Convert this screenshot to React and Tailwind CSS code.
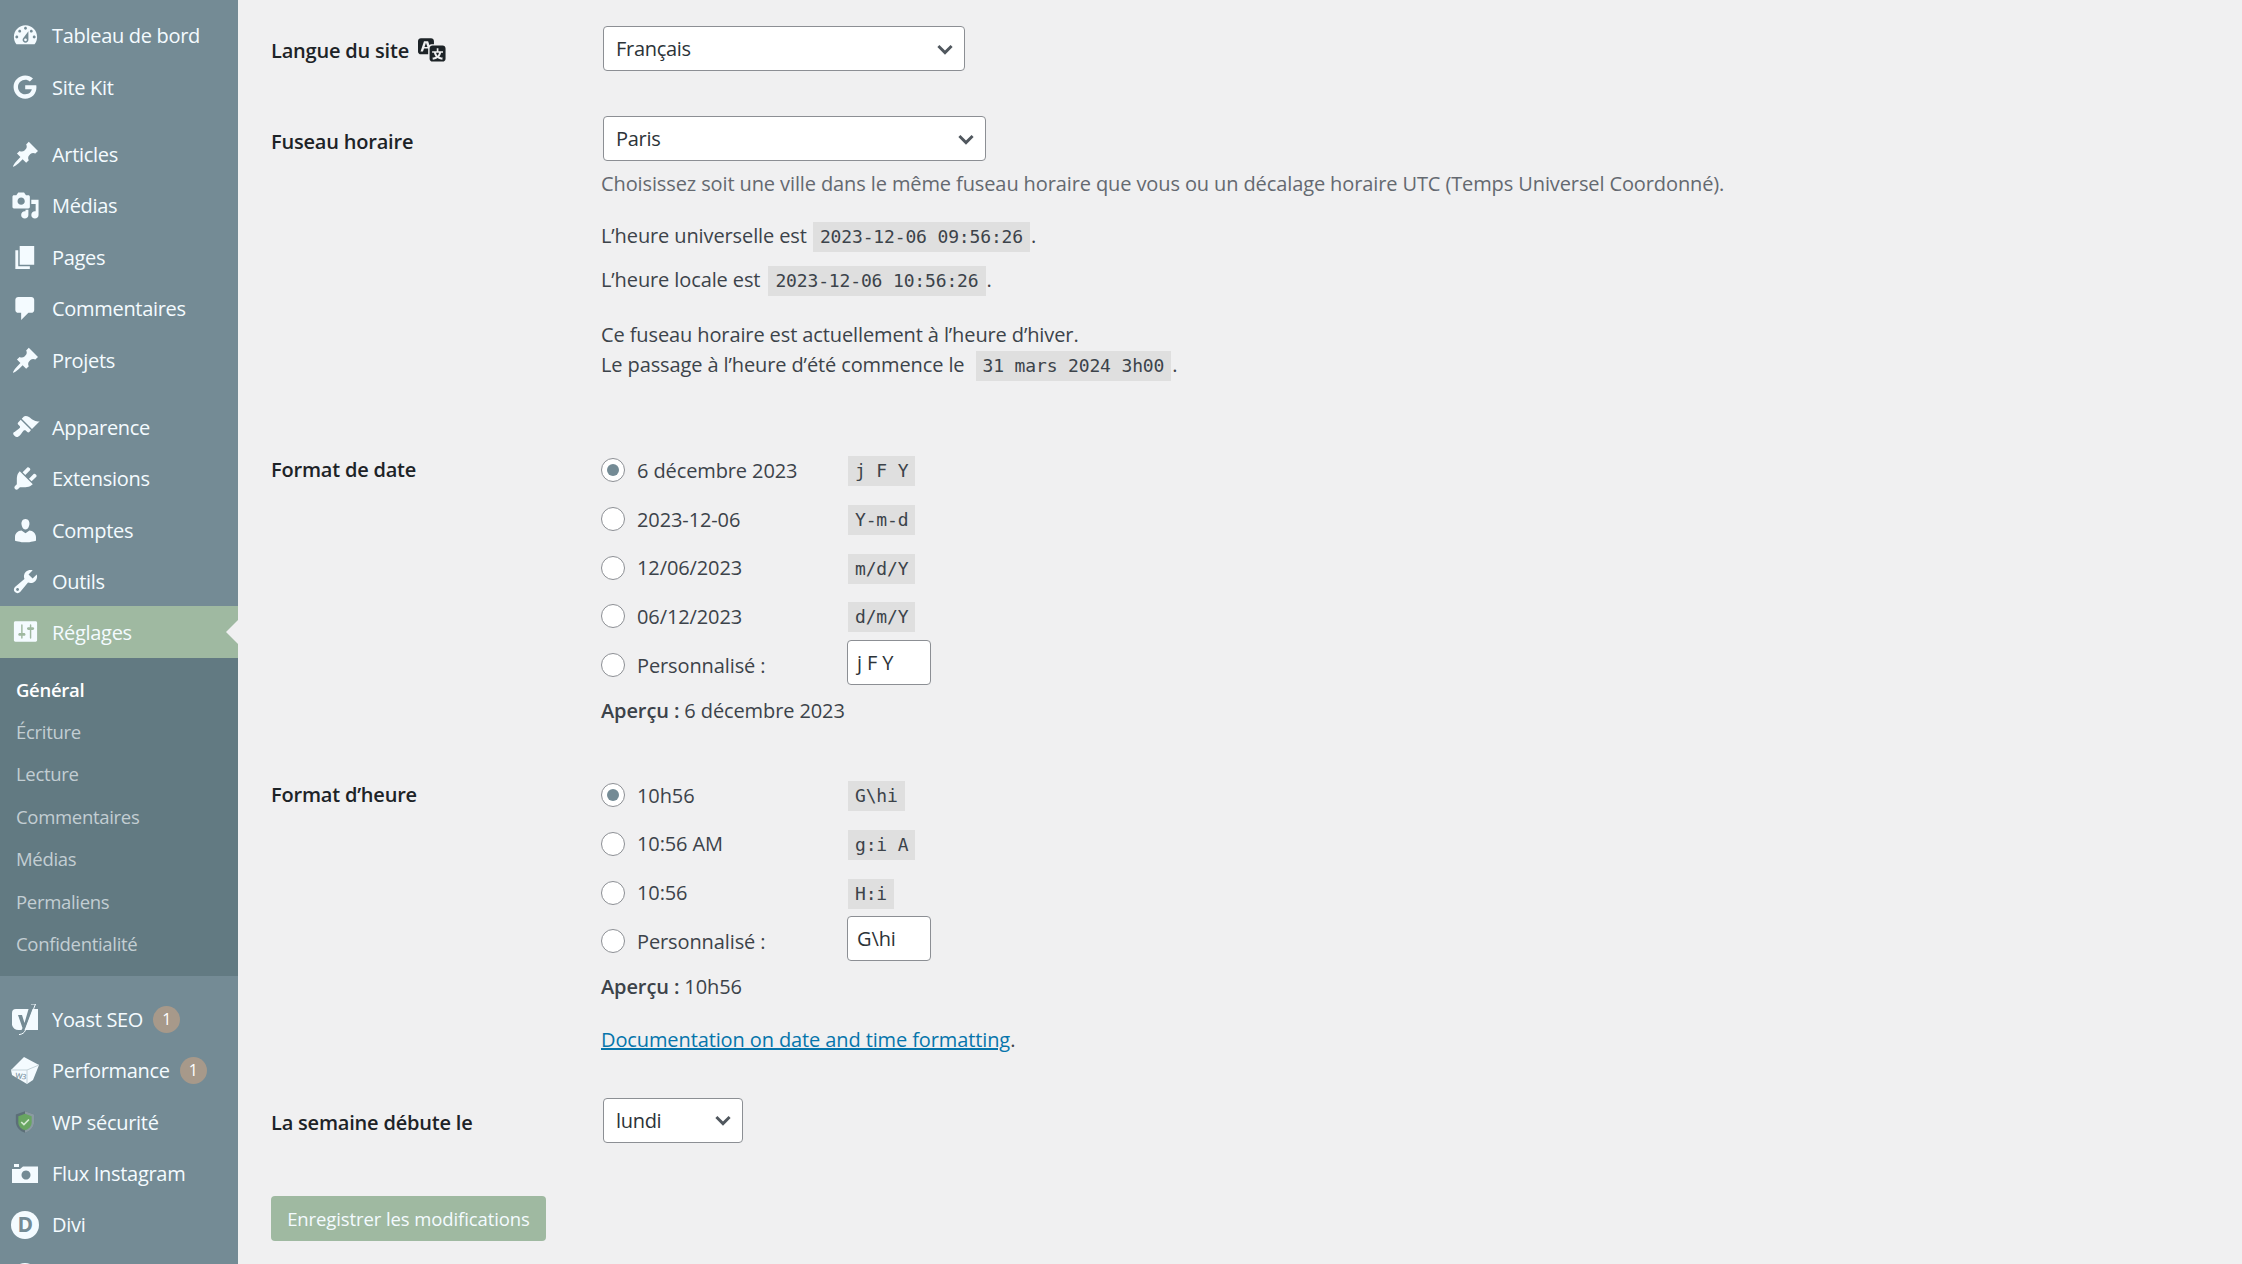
import React from "react";
import { FaGoogle } from "react-icons/fa";

const P = {
  dash: "M3.76 16h12.48c1.1-1.37 1.76-3.11 1.76-5 0-4.42-3.58-8-8-8s-8 3.58-8 8c0 1.89.66 3.63 1.76 5zM10 4c.55 0 1 .45 1 1s-.45 1-1 1-1-.45-1-1 .45-1 1-1zM6 6c.55 0 1 .45 1 1s-.45 1-1 1-1-.45-1-1 .45-1 1-1zm8 0c.55 0 1 .45 1 1s-.45 1-1 1-1-.45-1-1 .45-1 1-1zm-5.37 5.55L12 7v6c0 1.1-.9 2-2 2s-2-.9-2-2c0-.57.24-1.08.63-1.45zM4 10c.55 0 1 .45 1 1s-.45 1-1 1-1-.45-1-1 .45-1 1-1zm12 0c.55 0 1 .45 1 1s-.45 1-1 1-1-.45-1-1 .45-1 1-1zm-5 3c0-.55-.45-1-1-1s-1 .45-1 1 .45 1 1 1 1-.45 1-1z",
  pin: "M10.44 3.02l1.82-1.82 6.36 6.35-1.83 1.82c-1.05-.68-2.48-.57-3.41.36l-.75.75c-.92.93-1.04 2.35-.35 3.41l-1.83 1.82-2.41-2.41-2.8 2.79c-.42.42-3.38 2.71-3.8 2.29s1.86-3.39 2.28-3.81l2.79-2.79L4.1 9.36l1.83-1.82c1.05.69 2.48.57 3.4-.36l.75-.75c.93-.92 1.05-2.35.36-3.41z",
  media: "M13 11V4c0-.55-.45-1-1-1h-1.67L9 1H5L3.67 3H2c-.55 0-1 .45-1 1v7c0 .55.45 1 1 1h10c.55 0 1-.45 1-1zM7 4.5c1.38 0 2.5 1.12 2.5 2.5S8.38 9.5 7 9.5 4.5 8.38 4.5 7 5.62 4.5 7 4.5zM14 6h5v10.5c0 1.38-1.12 2.5-2.5 2.5S14 17.88 14 16.5s1.12-2.5 2.5-2.5c.17 0 .34.02.5.05V9h-3V6zm-4 8.05V13h2v3.5c0 1.38-1.12 2.5-2.5 2.5S7 17.88 7 16.5 8.12 14 9.5 14c.17 0 .34.02.5.05z",
  page: "M6 15V2h10v13H6zm-1 1h8v2H3V5h2v11z",
  comment: "M5 2h9c1.1 0 2 .9 2 2v7c0 1.1-.9 2-2 2h-2l-5 5v-5H5c-1.1 0-2-.9-2-2V4c0-1.1.9-2 2-2z",
  brush: "M14.48 11.06L7.41 3.99l1.5-1.5c.5-.56 2.3-.47 3.51.32 1.21.8 1.43 1.28 2.91 2.1 1.18.64 2.45 1.26 4.45.85zm-.71.71L6.7 4.7 4.93 6.47c-.39.39-.39 1.02 0 1.41l1.06 1.06c.39.39.39 1.03 0 1.42-.6.6-1.43 1.11-2.21 1.69-.35.26-.7.53-1.01.84C1.43 13.23.99 14.3 2.4 15.71c1.4 1.41 2.47.97 3.82-.38.31-.31.58-.66.84-1.01.58-.78 1.09-1.61 1.69-2.21.39-.39 1.03-.39 1.42 0l1.06 1.06c.39.39 1.02.39 1.41 0z",
  plug: "M13.11 4.36L9.87 7.6 8 5.73l3.24-3.24c.35-.34 1.05-.2 1.56.32.52.51.66 1.21.31 1.55zm-8 1.77l.91-1.12 9.01 9.01-1.19.84c-.71.71-2.63 1.16-3.82 1.16H6.14L4.9 17.26c-.59.59-1.54.59-2.12 0-.59-.58-.59-1.53 0-2.12l1.24-1.24v-3.88c0-1.13.4-3.19 1.09-3.89zm7.26 3.97l3.24-3.24c.34-.35 1.04-.21 1.55.31.52.51.66 1.21.31 1.55l-3.24 3.25z",
  user: "M10 9.25c-2.27 0-2.73-3.44-2.73-3.44C7 4.02 7.82 2 9.97 2c2.16 0 2.98 2.02 2.71 3.81 0 0-.41 3.44-2.68 3.44zm0 2.57L12.72 10c2.39 0 4.52 2.33 4.52 4.53v2.49s-3.65 1.13-7.24 1.13c-3.65 0-7.24-1.13-7.24-1.13v-2.49c0-2.25 1.94-4.48 4.47-4.48z",
  tool: "M16.68 9.77c-1.34 1.34-3.3 1.67-4.95.99l-5.41 6.52c-.99.99-2.59.99-3.58 0s-.99-2.59 0-3.57l6.52-5.42c-.68-1.65-.35-3.61.99-4.95 1.28-1.28 3.12-1.62 4.72-1.06l-2.89 2.89 2.82 2.82 2.86-2.87c.53 1.58.18 3.39-1.08 4.65zM3.81 16.21c.4.39 1.04.39 1.43 0 .4-.4.4-1.04 0-1.43-.39-.4-1.03-.4-1.43 0-.39.39-.39 1.03 0 1.43z",
  settings: "M18 16V4c0-.55-.45-1-1-1H3c-.55 0-1 .45-1 1v12c0 .55.45 1 1 1h14c.55 0 1-.45 1-1zM8 11h1c.55 0 1 .45 1 1s-.45 1-1 1H8v1.5c0 .28-.22.5-.5.5s-.5-.22-.5-.5V13H6c-.55 0-1-.45-1-1s.45-1 1-1h1V5.5c0-.28.22-.5.5-.5s.5.22.5.5V11zm5-2h-1c-.55 0-1-.45-1-1s.45-1 1-1h1V5.5c0-.28.22-.5.5-.5s.5.22.5.5V7h1c.55 0 1 .45 1 1s-.45 1-1 1h-1v5.5c0 .28-.22.5-.5.5s-.5-.22-.5-.5V9z",
  translate: "M11 7H9.49c-.63 0-1.25.3-1.59.7L7 5H4.13l-2.39 7h1.69l.74-2H7v4H2c-1.1 0-2-.9-2-2V5c0-1.1.9-2 2-2h7c1.1 0 2 .9 2 2v2zM6.51 9H4.49l1-2.93zM10 8h7c1.1 0 2 .9 2 2v7c0 1.1-.9 2-2 2h-7c-1.1 0-2-.9-2-2v-7c0-1.1.9-2 2-2zm7.25 5v-1.08h-3.17V9.75h-1.16v2.17H9.75V13h1.28c.11.85.56 1.85 1.28 2.62-.87.36-1.89.62-2.31.62-.01.02.22.97.2 1.46.84 0 2.21-.5 3.28-1.15 1.09.65 2.48 1.15 3.34 1.15-.02-.49.2-1.44.2-1.46-.43 0-1.49-.27-2.38-.63.7-.77 1.14-1.77 1.25-2.61h1.36zm-3.81 1.93c-.5-.46-.85-1.13-1.01-1.93h2.09c-.17.8-.51 1.47-1 1.93l-.04.03s-.03-.02-.04-.03z",
};

const Dash = ({ d, className = "w-[29px] h-[29px]" }) => (
  <svg viewBox="0 0 20 20" className={className} fill="currentColor" fillRule="evenodd"><path d={d} /></svg>
);

const Yoast = () => (
  <svg viewBox="0 0 26 31" className="w-[26px] h-[31px]">
    <path d="M4 5h22v21H7a7 7 0 0 1-7-5V9a4 4 0 0 1 4-4z" fill="#f4fbff" />
    <path d="M18 0h4.500L13 25c-1.200 3-3 5-6 5v-3c1.800 0 3-1 3.500-3L6 11h4l2.500 8z" fill="#748b95" />
    <path d="M19 0h4.500L13.500 26c-1 2.800-3.300 4.300-6.500 4.600" fill="none" stroke="#f4fbff" strokeWidth="1" />
  </svg>
);

const Cube = () => (
  <svg viewBox="0 0 28 27" className="w-[28px] h-[27px]">
    <path d="M0 13 13 0l15 8-6 15-6 4L1 18z" fill="#f4fbff" />
    <path d="M0 13l16 0 12-5" stroke="#c3d2d8" strokeWidth="1" fill="none" />
    <path d="M16 13l0 14" stroke="#c3d2d8" strokeWidth="1" fill="none" />
    <text x="4" y="21" fontSize="7.500" fontWeight="600" fill="#7e959f" fontFamily="'Open Sans',sans-serif" transform="rotate(8 4 21)">W3</text>
  </svg>
);

const Shield = () => (
  <svg viewBox="0 0 24 28" className="w-[20px] h-[24px]">
    <path d="M12 1 23 5v9c0 6-5 11-11 13C6 25 1 20 1 14V5z" fill="#5c6f78" />
    <path d="M12 1 23 5v9c0 6-5 11-11 13z" fill="#8a9aa2" />
    <path d="M12 4l8 3v7.500c0 4.500-3.500 8-8 9.500-4.500-1.500-8-5-8-9.500V7z" fill="#68a561" />
    <path d="M7.500 14l3.200 3.200 6-6.200" fill="none" stroke="#d5ead2" strokeWidth="2" />
  </svg>
);

const Cam = () => (
  <svg viewBox="0 0 26 19" className="w-[26px] h-[19px]">
    <path fillRule="evenodd" fill="#f4fbff" d="M2 0h5v3H2zM0 5h8l3-2.500h15V19H0zM14 6.500a4.500 4.500 0 1 0 .01 0z" />
  </svg>
);

const Divi = () => (
  <div className="w-[28px] h-[28px] rounded-full bg-[#f4fbff] flex items-center justify-center text-[#748b95] text-[21px] font-bold leading-none">D</div>
);

const Badge = () => (
  <span className="ml-[10px] w-[27px] h-[27px] rounded-full bg-[#a7998a] text-white text-[16px] leading-[27px] text-center">1</span>
);

const Item = ({ icon, children, active, badge }) => (
  <div className={`relative flex items-center pl-[52px] ${active ? "bg-[#9fb9a1] h-[52px] -mt-[1.4px]" : "h-[51.4px]"}`}>
    <span className="absolute left-[10px] top-0 bottom-0 w-[30px] flex items-center justify-center">{icon}</span>
    <span className={active ? "mt-[3px]" : "mt-[1px]"}>{children}</span>
    {badge && <Badge />}
    {active && <span className="absolute right-0 top-[14px] w-0 h-0 border-y-[12px] border-y-transparent border-r-[12px] border-r-[#f0f0f1]" />}
  </div>
);

const Sub = ({ children, bold }) => (
  <div className={`h-[42.4px] flex items-center pl-[16px] text-[18.5px] ${bold ? "font-semibold text-white" : "text-[#c3ced3]"}`}>{children}</div>
);

const Code = ({ children, className = "" }) => (
  <code className={`inline-block align-top h-[30px] leading-[30px] px-[7px] bg-[#dfdfdf] text-[#3c434a] text-[18px] tracking-[-0.15px] whitespace-pre font-['DejaVu_Sans_Mono',monospace] ${className}`}>{children}</code>
);

const Chevron = () => (
  <svg viewBox="0 0 20 20" className="w-[24px] h-[24px] text-[#50575e]" fill="none" stroke="currentColor" strokeWidth="2.4"><path d="M4.500 7.500 10 13l5.500-5.500" /></svg>
);

const Select = ({ w, children }) => (
  <div className={`ml-[2px] ${w} h-[45px] bg-white border border-[#8c8f94] rounded-[4px] flex items-center justify-between pl-[12px] pr-[7px] text-[#2c3338] tracking-[-0.3px]`}>
    <span className="mt-[1px]">{children}</span>
    <Chevron />
  </div>
);

const Radio = ({ on }) => (
  <span className="w-[24px] h-[24px] shrink-0 rounded-full bg-white border border-[#8c8f94] flex items-center justify-center">
    {on && <span className="w-[12px] h-[12px] rounded-full bg-[#748b95]" />}
  </span>
);

const Option = ({ on, label, code, input }) => (
  <div className="h-[48.7px] flex items-center">
    <Radio on={on} />
    <span className="ml-[12px] mt-[1px] w-[211px] shrink-0">{label}</span>
    {code && <Code className="mt-[2px]">{code}</Code>}
    {input && (
      <div className="-ml-[1px] mb-[6px] w-[84px] h-[45px] bg-white border border-[#8c8f94] rounded-[4px] pl-[9px] leading-[43px] text-[#2c3338]">{input}</div>
    )}
  </div>
);

const Label = ({ children, className = "" }) => (
  <div className={`w-[330px] shrink-0 font-semibold text-[#1d2327] tracking-[-0.2px] ${className}`}>{children}</div>
);

export default function App() {
  return (
    <div className="flex w-[2242px] h-[1264px] overflow-hidden bg-[#f0f0f1] text-[20px] leading-[30px] text-[#3c434a] font-['Open_Sans',sans-serif]">
      <aside className="w-[238px] shrink-0 bg-[#748b95] text-[#f4fbff] pt-[10px] overflow-hidden tracking-[-0.3px]">
        <Item icon={<Dash d={P.dash} />}>Tableau de bord</Item>
        <Item icon={<FaGoogle className="w-[24px] h-[24px]" />}>Site Kit</Item>
        <div className="mt-[16px]">
          <Item icon={<Dash d={P.pin} />}>Articles</Item>
          <Item icon={<Dash d={P.media} />}>Médias</Item>
          <Item icon={<Dash d={P.page} />}>Pages</Item>
          <Item icon={<Dash d={P.comment} />}>Commentaires</Item>
          <Item icon={<Dash d={P.pin} />}>Projets</Item>
        </div>
        <div className="mt-[16px]">
          <Item icon={<Dash d={P.brush} />}>Apparence</Item>
          <Item icon={<Dash d={P.plug} />}>Extensions</Item>
          <Item icon={<Dash d={P.user} />}>Comptes</Item>
          <Item icon={<Dash d={P.tool} />}>Outils</Item>
          <Item active icon={<Dash d={P.settings} />}>Réglages</Item>
        </div>
        <div className="bg-[#627a82] pt-[10.5px] pb-[10.5px]">
          <Sub bold>Général</Sub>
          <Sub>Écriture</Sub>
          <Sub>Lecture</Sub>
          <Sub>Commentaires</Sub>
          <Sub>Médias</Sub>
          <Sub>Permaliens</Sub>
          <Sub>Confidentialité</Sub>
        </div>
        <div className="mt-[18px]">
          <Item badge icon={<Yoast />}>Yoast SEO</Item>
          <Item badge icon={<Cube />}>Performance</Item>
          <Item icon={<Shield />}>WP sécurité</Item>
          <Item icon={<Cam />}>Flux Instagram</Item>
          <Item icon={<Divi />}>Divi</Item>
          <Item icon={<span className="w-[26px] h-[26px] rounded-full bg-[#f4fbff]" />}></Item>
        </div>
      </aside>

      <main className="flex-1 pl-[33px] pt-[26px] tracking-[-0.11px]">
        <section className="flex">
          <Label className="mt-[10px] flex items-start">
            <span>Langue du site</span>
            <Dash d={P.translate} className="w-[29px] h-[29px] ml-[9px] -mt-[2px]" />
          </Label>
          <Select w="w-[362px]">Français</Select>
        </section>

        <section className="flex mt-[45px]">
          <Label className="mt-[11px]">Fuseau horaire</Label>
          <div>
            <Select w="w-[383px]">Paris</Select>
            <p className="mt-[8px] h-[30px] text-[#646970]">Choisissez soit une ville dans le même fuseau horaire que vous ou un décalage horaire UTC (Temps Universel Coordonné).</p>
            <p className="mt-[22px] h-[30px]">L’heure universelle est <Code className="ml-[1px] mr-[1px] mt-[1px]">2023-12-06 09:56:26</Code>.</p>
            <p className="mt-[14px] h-[30px]">L’heure locale est <Code className="ml-[3px] mr-[1px] mt-[1px]">2023-12-06 10:56:26</Code>.</p>
            <p className="mt-[25px] h-[30px]">Ce fuseau horaire est actuellement à l’heure d’hiver.</p>
            <p className="mt-[0px] h-[30px]">Le passage à l’heure d’été commence le <Code className="ml-[6px] mr-[1px] mt-[1px]">31 mars 2024 3h00</Code>.</p>
          </div>
        </section>

        <section className="flex mt-[66px]">
          <Label className="mt-[9px]">Format de date</Label>
          <div>
            <Option on label="6 décembre 2023" code="j F Y" />
            <Option label="2023-12-06" code="Y-m-d" />
            <Option label="12/06/2023" code="m/d/Y" />
            <Option label="06/12/2023" code="d/m/Y" />
            <Option label="Personnalisé :" input="j F Y" />
            <p className="mt-[6.5px]"><strong className="font-semibold">Aperçu :</strong> 6 décembre 2023</p>
          </div>
        </section>

        <section className="flex mt-[45px]">
          <Label className="mt-[9px]">Format d’heure</Label>
          <div>
            <Option on label="10h56" code="G\hi" />
            <Option label="10:56 AM" code="g:i A" />
            <Option label="10:56" code="H:i" />
            <Option label="Personnalisé :" input="G\hi" />
            <p className="mt-[6px]"><strong className="font-semibold">Aperçu :</strong> 10h56</p>
            <p className="mt-[23px]"><a className="text-[#0675ab] underline">Documentation on date and time formatting</a>.</p>
          </div>
        </section>

        <section className="flex mt-[43px]">
          <Label className="mt-[10px]">La semaine débute le</Label>
          <Select w="w-[140px]">lundi</Select>
        </section>

        <button className="mt-[53px] w-[275px] h-[45px] pt-[2px] rounded-[4px] bg-[#9fb9a1] text-[#f4fbff] text-center text-[18.5px] tracking-[-0.1px]">Enregistrer les modifications</button>
      </main>
    </div>
  );
}
